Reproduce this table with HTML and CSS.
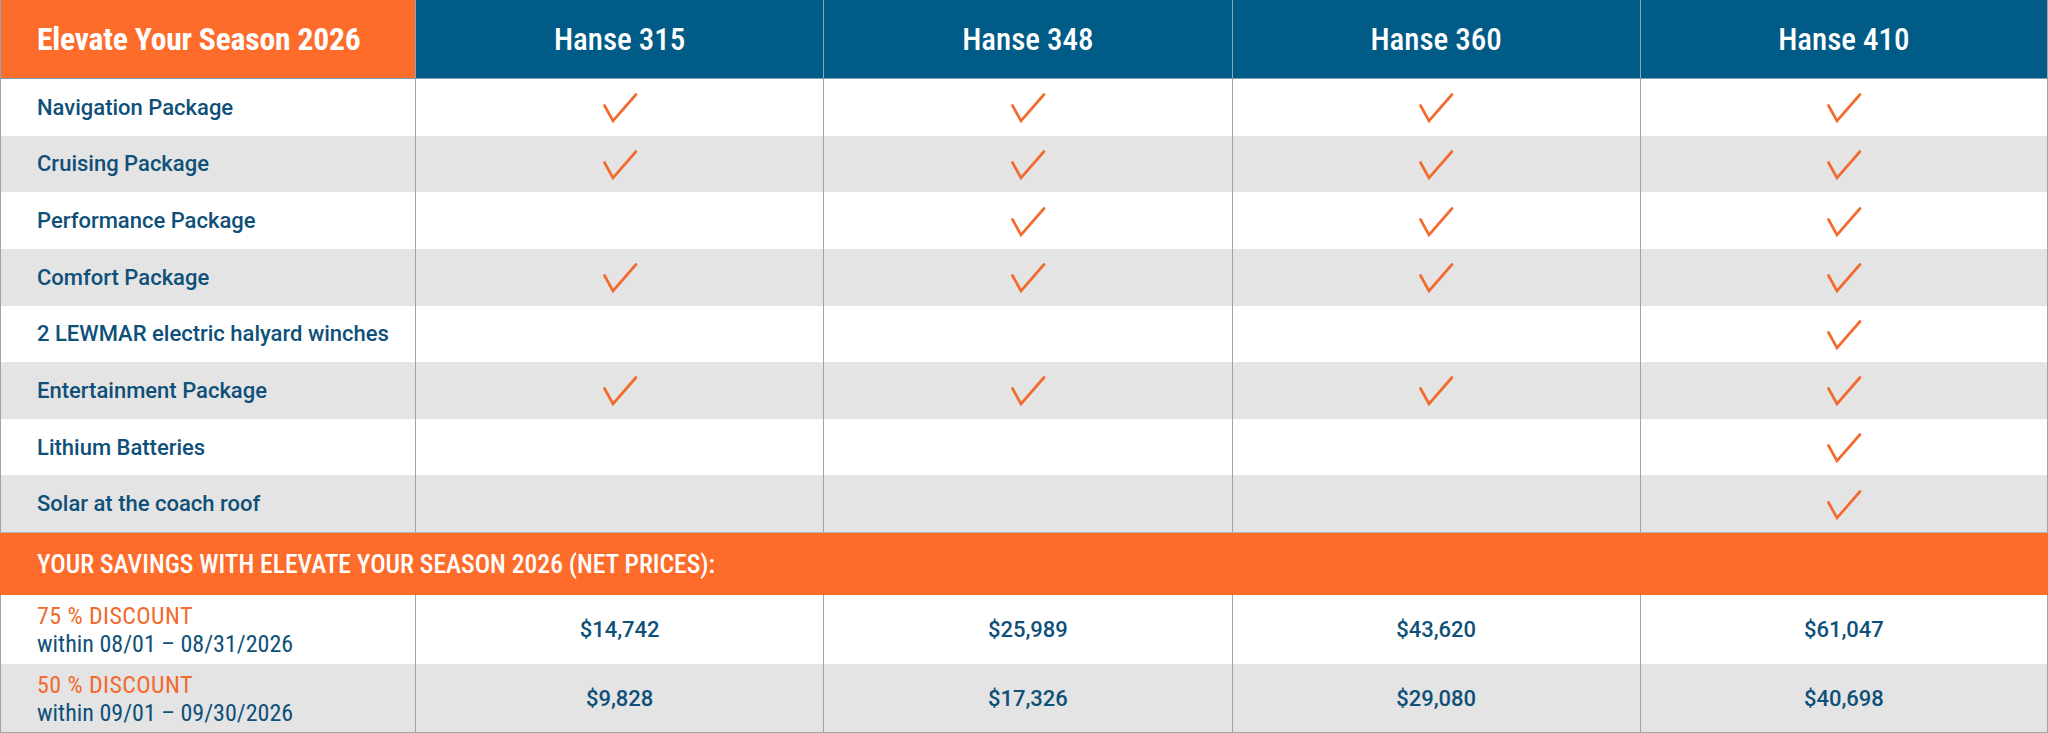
FILE: index.html
```html
<!DOCTYPE html>
<html lang="en">
<head>
<meta charset="utf-8">
<title>Elevate Your Season 2026</title>
<link rel="stylesheet" href="styles.css">
</head>
<body>
<svg width="0" height="0" class="defs" aria-hidden="true">
  <defs>
    <symbol id="check" viewBox="0 0 36 32">
      <polyline points="2.5,13.5 11,29 34,2.5" fill="none" stroke="#f26a2c" stroke-width="2.7" stroke-linecap="round" stroke-linejoin="miter"/>
    </symbol>
  </defs>
</svg>
<div class="table">
  <div class="row head">
    <div class="cell title">Elevate Your Season 2026</div>
    <div class="cell model">Hanse 315</div>
    <div class="cell model">Hanse 348</div>
    <div class="cell model">Hanse 360</div>
    <div class="cell model">Hanse 410</div>
  </div>

  <div class="row feature">
    <div class="cell label">Navigation Package</div>
    <div class="cell mark"><svg class="ck"><use href="#check"/></svg></div>
    <div class="cell mark"><svg class="ck"><use href="#check"/></svg></div>
    <div class="cell mark"><svg class="ck"><use href="#check"/></svg></div>
    <div class="cell mark"><svg class="ck"><use href="#check"/></svg></div>
  </div>
  <div class="row feature alt">
    <div class="cell label">Cruising Package</div>
    <div class="cell mark"><svg class="ck"><use href="#check"/></svg></div>
    <div class="cell mark"><svg class="ck"><use href="#check"/></svg></div>
    <div class="cell mark"><svg class="ck"><use href="#check"/></svg></div>
    <div class="cell mark"><svg class="ck"><use href="#check"/></svg></div>
  </div>
  <div class="row feature">
    <div class="cell label">Performance Package</div>
    <div class="cell mark"></div>
    <div class="cell mark"><svg class="ck"><use href="#check"/></svg></div>
    <div class="cell mark"><svg class="ck"><use href="#check"/></svg></div>
    <div class="cell mark"><svg class="ck"><use href="#check"/></svg></div>
  </div>
  <div class="row feature alt">
    <div class="cell label">Comfort Package</div>
    <div class="cell mark"><svg class="ck"><use href="#check"/></svg></div>
    <div class="cell mark"><svg class="ck"><use href="#check"/></svg></div>
    <div class="cell mark"><svg class="ck"><use href="#check"/></svg></div>
    <div class="cell mark"><svg class="ck"><use href="#check"/></svg></div>
  </div>
  <div class="row feature">
    <div class="cell label">2 LEWMAR electric halyard winches</div>
    <div class="cell mark"></div>
    <div class="cell mark"></div>
    <div class="cell mark"></div>
    <div class="cell mark"><svg class="ck"><use href="#check"/></svg></div>
  </div>
  <div class="row feature alt">
    <div class="cell label">Entertainment Package</div>
    <div class="cell mark"><svg class="ck"><use href="#check"/></svg></div>
    <div class="cell mark"><svg class="ck"><use href="#check"/></svg></div>
    <div class="cell mark"><svg class="ck"><use href="#check"/></svg></div>
    <div class="cell mark"><svg class="ck"><use href="#check"/></svg></div>
  </div>
  <div class="row feature">
    <div class="cell label">Lithium Batteries</div>
    <div class="cell mark"></div>
    <div class="cell mark"></div>
    <div class="cell mark"></div>
    <div class="cell mark"><svg class="ck"><use href="#check"/></svg></div>
  </div>
  <div class="row feature alt">
    <div class="cell label">Solar at the coach roof</div>
    <div class="cell mark"></div>
    <div class="cell mark"></div>
    <div class="cell mark"></div>
    <div class="cell mark"><svg class="ck"><use href="#check"/></svg></div>
  </div>

  <div class="savings">YOUR SAVINGS WITH ELEVATE YOUR SEASON 2026 (NET PRICES):</div>

  <div class="row discount">
    <div class="cell label disc">
      <span class="pct">75 % DISCOUNT</span>
      <span class="period">within 08/01 – 08/31/2026</span>
    </div>
    <div class="cell price">$14,742</div>
    <div class="cell price">$25,989</div>
    <div class="cell price">$43,620</div>
    <div class="cell price">$61,047</div>
  </div>
  <div class="row discount alt last">
    <div class="cell label disc">
      <span class="pct">50 % DISCOUNT</span>
      <span class="period">within 09/01 – 09/30/2026</span>
    </div>
    <div class="cell price">$9,828</div>
    <div class="cell price">$17,326</div>
    <div class="cell price">$29,080</div>
    <div class="cell price">$40,698</div>
  </div>
</div>
</body>
</html>
```
FILE: styles.css
```css
html, body {
  margin: 0;
  padding: 0;
  background: #ffffff;
}

.defs {
  position: absolute;
  width: 0;
  height: 0;
  overflow: hidden;
}

.table {
  width: 2048px;
  display: flex;
  flex-direction: column;
  font-family: Roboto, "Liberation Sans", sans-serif;
  color: #0f5079;
}

.row {
  display: grid;
  grid-template-columns: 415px repeat(4, 1fr);
  background: #ffffff;
}

.row.alt {
  background: #e4e4e4;
}

.cell {
  box-sizing: border-box;
  border-left: 1px solid #a3a3a3;
  display: flex;
  align-items: center;
  justify-content: center;
}

.cell:last-child {
  border-right: 1px solid #a3a3a3;
}

.head {
  height: 79px;
  background: #005b86;
  border-bottom: 1px solid #7d9db3;
  box-sizing: border-box;
}

.head .cell {
  border-left-color: #8aa3b5;
}

.title {
  background: #fe6c2b;
  justify-content: flex-start;
  padding-left: 36px;
  color: #ffffff;
  font-family: "Roboto Condensed", "Liberation Sans Narrow", "DejaVu Sans Condensed", sans-serif;
  font-stretch: condensed;
  font-weight: 700;
  font-size: 31.6px;
  letter-spacing: -0.2px;
}

.model {
  color: #ffffff;
  font-family: "Roboto Condensed", "Liberation Sans Narrow", "DejaVu Sans Condensed", sans-serif;
  font-stretch: condensed;
  font-weight: 500;
  font-size: 31px;
}

.feature {
  height: 56.625px;
}

.label {
  justify-content: flex-start;
  padding-left: 36px;
  font-size: 22px;
  font-weight: 500;
}

.ck {
  width: 36px;
  height: 32px;
  margin-top: 2px;
}

.savings {
  height: 63px;
  box-sizing: border-box;
  border-top: 1px solid #b0b0b0;
  background: #fe6c2b;
  color: #ffffff;
  display: flex;
  align-items: center;
  padding-left: 37px;
  font-family: "Roboto Condensed", "Liberation Sans Narrow", "DejaVu Sans Condensed", sans-serif;
  font-stretch: condensed;
  font-size: 25.6px;
  font-weight: 500;
}

.discount {
  height: 69px;
}

.discount.last {
  border-bottom: 1px solid #a3a3a3;
  box-sizing: border-box;
}

.disc {
  flex-direction: column;
  align-items: flex-start;
  justify-content: center;
  font-family: "Roboto Condensed", "Liberation Sans Narrow", "DejaVu Sans Condensed", sans-serif;
  font-stretch: condensed;
  font-weight: 400;
  font-size: 24px;
  line-height: 28px;
  padding-top: 1px;
}

.pct {
  color: #f26a2c;
  letter-spacing: 0.4px;
}

.period {
  color: #0f5079;
}

.price {
  font-size: 22px;
  font-weight: 500;
  color: #0f5079;
}
```
